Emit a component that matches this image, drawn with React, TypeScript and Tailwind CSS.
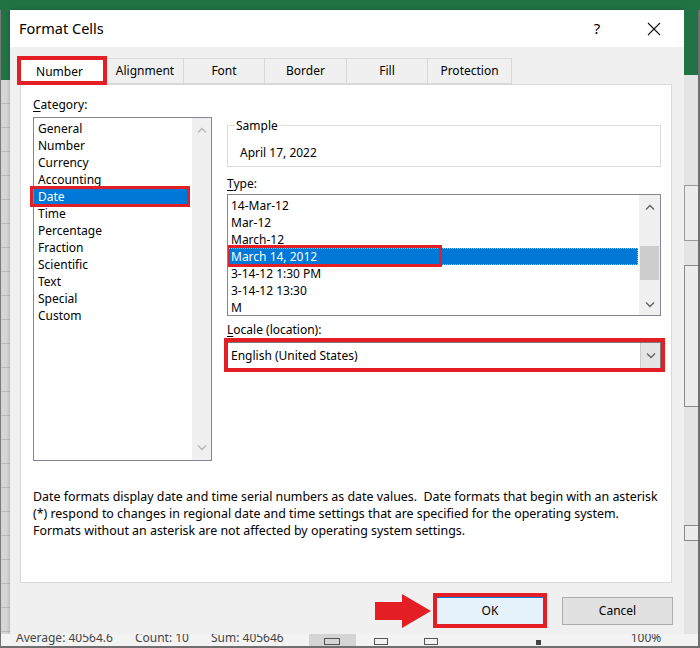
import React from 'react';

const ui = "font-['Noto_Sans','Segoe_UI',sans-serif]";

function Chevron({ up = false, color = '#606060' }: { up?: boolean; color?: string }) {
  return (
    <svg width="10" height="6" viewBox="0 0 10 6" fill="none">
      <polyline
        points={up ? '1,5.5 5,1.5 9,5.5' : '1,0.5 5,4.5 9,0.5'}
        stroke={color}
        strokeWidth="1.3"
      />
    </svg>
  );
}

function RedBox({ className }: { className: string }) {
  return <div className={`pointer-events-none absolute border-[3px] border-[#e31e25] ${className}`} />;
}

const categories = [
  'General',
  'Number',
  'Currency',
  'Accounting',
  'Date',
  'Time',
  'Percentage',
  'Fraction',
  'Scientific',
  'Text',
  'Special',
  'Custom',
];

const types = ['14-Mar-12', 'Mar-12', 'March-12', 'March 14, 2012', '3-14-12 1:30 PM', '3-14-12 13:30', 'M'];

const tabs = [
  { label: 'Alignment', w: 'w-[77px]' },
  { label: 'Font', w: 'w-[81px]' },
  { label: 'Border', w: 'w-[82px]' },
  { label: 'Fill', w: 'w-[81px]' },
  { label: 'Protection', w: 'w-[84px]' },
];

function CategoryList() {
  return (
    <div className="flex h-[344px] w-[179px] border border-[#828790] bg-white">
      <div className="flex-1 pr-[2px] pt-[1.5px]">
        {categories.map((c) =>
          c === 'Date' ? (
            <div key={c} className="relative h-[17px] bg-[#0078d7] pl-[4px] leading-[17px] text-white">
              {c}
              <RedBox className="-left-[4px] right-0 -top-[2px] -bottom-[2px]" />
            </div>
          ) : (
            <div key={c} className="h-[17px] pl-[4px] leading-[17px]">
              {c}
            </div>
          ),
        )}
      </div>
      <div className="flex w-[19px] flex-col items-center justify-between bg-[#f0f0f0] pb-[9px] pt-[9px]">
        <Chevron up color="#b4b4b4" />
        <Chevron color="#b4b4b4" />
      </div>
    </div>
  );
}

function TypeList() {
  return (
    <div className="mt-[2px] flex h-[122px] border border-[#828790] bg-white">
      <div className="flex-1 overflow-hidden pr-[1px] pt-[1.5px]">
        {types.map((t) =>
          t === 'March 14, 2012' ? (
            <div
              key={t}
              className="relative h-[17px] border border-dotted border-[#8fc2ee] bg-[#0078d7] pl-[2px] leading-[15px] text-white"
            >
              {t}
              <RedBox className="-left-[3px] -top-[4px] -bottom-[3px] w-[216px]" />
            </div>
          ) : (
            <div key={t} className="h-[17px] pl-[3px] leading-[17px]">
              {t}
            </div>
          ),
        )}
      </div>
      <div className="flex w-[21px] flex-col bg-[#f0f0f0]">
        <div className="flex h-[24px] items-center justify-center">
          <Chevron up />
        </div>
        <div className="mx-[1px] mt-[27px] h-[34px] bg-[#cdcdcd]" />
        <div className="flex-1" />
        <div className="flex h-[20px] items-center justify-center">
          <Chevron />
        </div>
      </div>
    </div>
  );
}

function Panel() {
  return (
    <div className="h-[499px] border border-[#d9d9d9] bg-white pl-[12px] pt-[11px] text-[12px] text-black">
      <div className="flex">
        <div>
          <div className="h-[17px] leading-[17px]">
            <span className="underline underline-offset-2">C</span>ategory:
          </div>
          <div className="mt-[4px]">
            <CategoryList />
          </div>
        </div>
        <div className="ml-[15px] w-[434px] pt-[21px]">
          <fieldset className="border border-[#dcdcdc] pb-[5.5px] pl-[7px]">
            <legend className="h-[17px] px-[1px] leading-[17px]">Sample</legend>
            <div className="mt-[9.5px] h-[17px] pl-[5px] leading-[17px]">April 17, 2022</div>
          </fieldset>
          <div className="mt-[8px] h-[17px] leading-[17px]">
            <span className="underline underline-offset-2">T</span>ype:
          </div>
          <TypeList />
          <div className="mt-[5px] h-[17px] leading-[17px]">
            <span className="underline underline-offset-2">L</span>ocale (location):
          </div>
          <div className="relative mt-[4px] flex h-[27px] border border-[#7a7a7a] bg-white">
            <div className="flex flex-1 items-center pl-[3px]">English (United States)</div>
            <div className="flex w-[20px] items-center justify-center border-l border-[#cccccc] bg-[#e5e5e5]">
              <Chevron />
            </div>
            <RedBox className="-left-[4px] -right-[5px] -top-[5px] -bottom-[4px] border-[4px]" />
          </div>
        </div>
      </div>
      <div className="mt-[27px] text-[12.4px] leading-[17px]">
        Date formats display date and time serial numbers as date values.&nbsp; Date formats that begin with an asterisk
        <br />
        (*) respond to changes in regional date and time settings that are specified for the operating system.
        <br />
        Formats without an asterisk are not affected by operating system settings.
      </div>
    </div>
  );
}

function Dialog() {
  return (
    <div className={`flex h-[624px] w-[674px] flex-col bg-[#f0f0f0] shadow-[0_0_4px_rgba(0,0,0,0.25)] ${ui}`}>
      {/* title bar */}
      <div className="flex h-[37px] shrink-0 items-center bg-white pr-[7px] text-black">
        <div className="flex-1 pl-[9px] text-[14.5px]">Format Cells</div>
        <div className="mr-[11px] flex w-[46px] justify-center text-[15px]">?</div>
        <div className="flex w-[46px] justify-center">
          <svg width="14" height="14" viewBox="0 0 14 14">
            <path d="M1 1 L13 13 M13 1 L1 13" stroke="#111" strokeWidth="1.1" />
          </svg>
        </div>
      </div>

      <div className="flex flex-1 flex-col px-[10px] pt-[11px]">
        {/* tabs */}
        <div className="relative z-10 flex h-[26px] text-[12px] text-black">
          <div className="relative -mb-[1px] flex w-[87px] items-center justify-center border border-b-0 border-[#d9d9d9] bg-white pr-[8px]">
            Number
            <RedBox className="-left-[4px] -top-[3px] -right-[1px] bottom-0 border-[4px]" />
          </div>
          {tabs.map((t) => (
            <div
              key={t.label}
              className={`flex ${t.w} items-center justify-center border border-l-0 border-[#d9d9d9] bg-[#f0f0f0]`}
            >
              {t.label}
            </div>
          ))}
        </div>
        <div className="mr-[2px]">
          <Panel />
        </div>

        {/* buttons */}
        <div className="mt-[14px] flex h-[28px] items-center justify-end pr-[1px] text-[12px] text-black">
          <svg width="56" height="34" viewBox="0 0 56 34" className="mr-[5px]">
            <rect x="0" y="8" width="29" height="18" fill="#e31e25" />
            <polygon points="27,0 56,17 27,34" fill="#e31e25" />
          </svg>
          <div className="relative">
            <div className="flex h-[28px] w-[108px] items-center justify-center border border-[#0078d7] bg-[#e5f1fb]">
              OK
            </div>
            <RedBox className="-left-[3px] -right-[3px] -top-[4px] -bottom-[3px] border-[4px]" />
          </div>
          <div className="ml-[18px] flex h-[28px] w-[111px] items-center justify-center border border-[#adadad] bg-[#e1e1e1]">
            Cancel
          </div>
        </div>
      </div>
    </div>
  );
}

function LeftStrip() {
  return (
    <div className="flex w-[10px] flex-col border-l border-[#7a7a7a]">
      <div className="h-[70px] bg-[#217346]" />
      <div className="flex flex-1 flex-col bg-[#d6d6d6]">
        {Array.from({ length: 23 }).map((_, i) => (
          <div key={i} className="h-[24px] border-b border-[#bdbdbd]" />
        ))}
      </div>
    </div>
  );
}

function RightStrip() {
  return (
    <div className="flex w-[16px] flex-col border-r-2 border-[#6f6f6f]">
      <div className="h-[65px] bg-[#217346]" />
      <div className="flex flex-1 flex-col bg-[#e4e4e4]">
        <div className="h-[110px]" />
        <div className="h-[56px] border-y border-l border-[#9a9a9a] bg-[#ececec]" />
        <div className="h-[24px]" />
        <div className="h-[142px] border-y border-l border-[#8a8a8a] bg-[#ececec]" />
        <div className="h-[118px]" />
        <div className="h-[16px] border-y border-l border-[#8a8a8a] bg-[#ececec]" />
      </div>
    </div>
  );
}

function StatusBar() {
  return (
    <div className={`flex h-[14px] overflow-hidden border-b-2 border-l border-r-2 border-[#6f6f6f] bg-[#f3f3f3] text-[12px] text-[#444] ${ui}`}>
      <div className="-mt-[5px] flex items-center">
        <span className="ml-[15px]">Average: 40564.6</span>
        <span className="ml-[22px]">Count: 10</span>
        <span className="ml-[22px]">Sum: 405646</span>
        <div className="ml-[25px] flex h-[22px] w-[47px] items-center justify-center bg-[#d4d4d4]">
          <div className="mt-[8px] h-[7px] w-[16px] border border-[#555]" />
        </div>
        <div className="ml-[18px] mt-[8px] h-[7px] w-[14px] border border-[#555]" />
        <div className="ml-[36px] mt-[8px] h-[7px] w-[14px] border border-[#555]" />
        <div className="ml-[98px] mt-[10px] h-[5px] w-[5px] bg-[#444]" />
        <span className="ml-[90px]">100%</span>
      </div>
    </div>
  );
}

export default function App() {
  return (
    <div className="flex h-[648px] w-[700px] flex-col overflow-hidden bg-[#d6d6d6]">
      <div className="h-[10px] shrink-0 bg-[#217346]" />
      <div className="flex h-[624px] shrink-0">
        <LeftStrip />
        <Dialog />
        <RightStrip />
      </div>
      <StatusBar />
    </div>
  );
}
